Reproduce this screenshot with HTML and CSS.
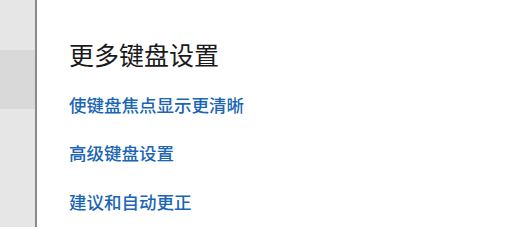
FILE: index.html
```html
<!DOCTYPE html>
<html lang="zh-CN">
<head>
<meta charset="utf-8">
<link rel="stylesheet" href="styles.css">
</head>
<body>
<div class="app">
  <aside class="sidebar">
    <div class="nav-item"></div>
    <div class="nav-item active"></div>
    <div class="nav-item"></div>
  </aside>
  <main class="content">
    <h2 class="heading">更多键盘设置</h2>
    <nav class="links">
      <a class="link" href="#">使键盘焦点显示更清晰</a>
      <a class="link" href="#">高级键盘设置</a>
      <a class="link" href="#">建议和自动更正</a>
    </nav>
  </main>
</div>
</body>
</html>
```

FILE: styles.css
```css
html, body {
  margin: 0;
  padding: 0;
  background: #ffffff;
}
body {
  font-family: "Noto Sans CJK SC", "Noto Sans", sans-serif;
  width: 523px;
  height: 227px;
  overflow: hidden;
}
.app {
  display: flex;
  height: 227px;
}
.sidebar {
  width: 35px;
  flex: none;
  background: #e6e6e6;
  border-right: 2px solid #8a8a8a;
  display: flex;
  flex-direction: column;
}
.nav-item {
  height: 50px;
  flex: none;
}
.nav-item.active {
  height: 59px;
  background: #d9d9d9;
}
.content {
  flex: 1;
  padding: 39px 0 0 32px;
}
.heading {
  margin: 0;
  font-size: 25px;
  line-height: 30px;
  font-weight: 400;
  color: #1a1a1a;
}
.links {
  display: flex;
  flex-direction: column;
  gap: 24.5px;
  margin-top: 23.5px;
}
.link {
  font-size: 17.5px;
  line-height: 24px;
  font-weight: 500;
  color: #1a66b4;
  text-decoration: none;
  align-self: flex-start;
}
```
